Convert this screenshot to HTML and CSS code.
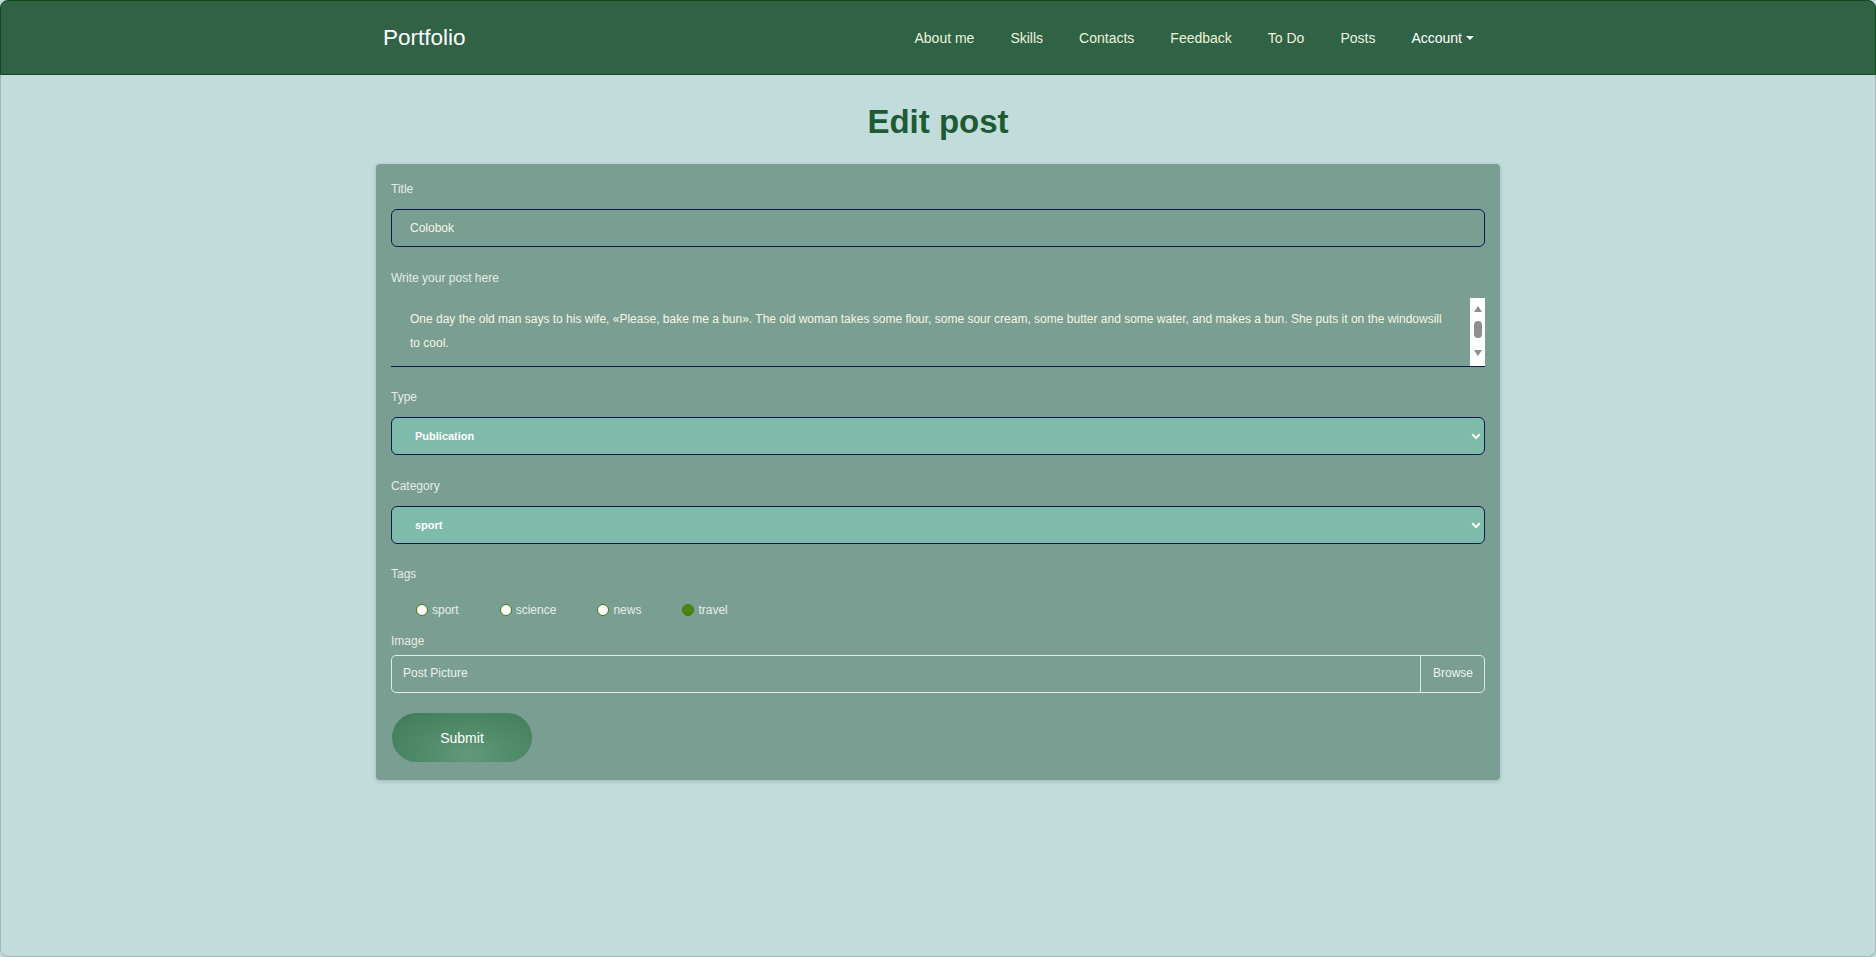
FILE: index.html
```html
<!DOCTYPE html>
<html lang="en">
<head>
<meta charset="utf-8">
<title>Edit post</title>
<link rel="stylesheet" href="styles.css">
</head>
<body>
<div class="page">
  <nav class="navbar">
    <div class="nav-inner">
      <a class="brand" href="#">Portfolio</a>
      <ul class="nav-links">
        <li><a href="#">About me</a></li>
        <li><a href="#">Skills</a></li>
        <li><a href="#">Contacts</a></li>
        <li><a href="#">Feedback</a></li>
        <li><a href="#">To Do</a></li>
        <li><a href="#">Posts</a></li>
        <li><a href="#" class="account">Account<span class="caret"></span></a></li>
      </ul>
    </div>
  </nav>

  <h1 class="page-title">Edit post</h1>

  <form class="card">
    <div class="group">
      <label class="label" for="title">Title</label>
      <input class="text-input" id="title" type="text" value="Colobok">
    </div>

    <div class="group">
      <label class="label" for="body">Write your post here</label>
      <div class="textarea-wrap">
        <textarea class="textarea" id="body">One day the old man says to his wife, «Please, bake me a bun». The old woman takes some flour, some sour cream, some butter and some water, and makes a bun. She puts it on the windowsill to cool.

The bun lies there, lies there, and then rolls off the windowsill onto the bench, from the bench onto the floor, along the floor to the door, over the threshold into the porch, from the porch into the yard, and out of the yard through the gate, further and further away.</textarea>
        <div class="scrollbar">
          <span class="sb-up"></span>
          <span class="sb-thumb"></span>
          <span class="sb-down"></span>
        </div>
      </div>
    </div>

    <div class="group">
      <label class="label" for="type">Type</label>
      <div class="select-wrap">
        <select class="select" id="type">
          <option>Publication</option>
          <option>Draft</option>
        </select>
        <svg class="chevron" width="10" height="7" viewBox="0 0 10 7"><polyline points="1.2,1.2 5,5 8.8,1.2" fill="none" stroke="#ffffff" stroke-width="2"/></svg>
      </div>
    </div>

    <div class="group">
      <label class="label" for="category">Category</label>
      <div class="select-wrap">
        <select class="select" id="category">
          <option>sport</option>
          <option>science</option>
          <option>news</option>
          <option>travel</option>
        </select>
        <svg class="chevron" width="10" height="7" viewBox="0 0 10 7"><polyline points="1.2,1.2 5,5 8.8,1.2" fill="none" stroke="#ffffff" stroke-width="2"/></svg>
      </div>
    </div>

    <div class="group tags-group">
      <span class="label">Tags</span>
      <div class="tags-row">
        <label class="tag"><input type="radio" name="tag" class="radio">sport</label>
        <label class="tag"><input type="radio" name="tag" class="radio">science</label>
        <label class="tag"><input type="radio" name="tag" class="radio">news</label>
        <label class="tag"><input type="radio" name="tag" class="radio" checked>travel</label>
      </div>
    </div>

    <div class="image-group">
      <span class="label label-tight">Image</span>
      <div class="file">
        <span class="file-name">Post Picture</span>
        <span class="browse">Browse</span>
      </div>
    </div>

    <button type="button" class="submit">Submit</button>
  </form>
</div>
</body>
</html>
```

FILE: styles.css
```css
* {
  box-sizing: border-box;
}

html, body {
  margin: 0;
  padding: 0;
}

body {
  background: #c2dcdc;
  font-family: "Liberation Sans", Arial, sans-serif;
  color: #e6eee8;
}

.page {
  min-height: 100vh;
  border: 1px solid #a3b7b7;
  border-top: none;
  border-radius: 8px;
}

.navbar {
  height: 75px;
  background: #306346;
  border: 1px solid #0f4a1e;
  border-radius: 8px 8px 0 0;
  margin: 0 -1px;
}

.nav-inner {
  width: 1124px;
  height: 100%;
  margin: 0 auto;
  padding: 1px 8px 0 7px;
  display: flex;
  align-items: center;
  justify-content: space-between;
}

.brand {
  font-size: 22.5px;
  color: #ffffff;
  text-decoration: none;
  line-height: 1;
}

.nav-links {
  list-style: none;
  margin: 0;
  padding: 0;
  display: flex;
  align-items: center;
}

.nav-links a {
  display: flex;
  align-items: center;
  padding: 0 18px;
  font-size: 14px;
  color: #eef2dc;
  text-decoration: none;
  line-height: 20px;
}

.nav-links a.account {
  color: #ffffff;
}

.caret {
  display: inline-block;
  margin-left: 4px;
  width: 0;
  height: 0;
  border-top: 4px solid #ffffff;
  border-left: 4px solid transparent;
  border-right: 4px solid transparent;
}

.page-title {
  margin: 27px 0 22px;
  text-align: center;
  font-size: 33px;
  line-height: 40px;
  font-weight: bold;
  color: #1e5b34;
}

.card {
  width: 1124px;
  margin: 0 auto;
  padding: 18px 15px 18px;
  background: #7a9e92;
  border-radius: 4px;
  box-shadow: 0 1px 4px rgba(40, 70, 60, 0.25);
}

.group {
  margin-bottom: 23.5px;
}

.label {
  display: block;
  font-size: 12px;
  line-height: 14px;
  margin-bottom: 13px;
  color: #e4ece6;
}

.label-tight {
  margin-bottom: 7px;
}

.text-input {
  display: block;
  width: 100%;
  height: 38px;
  padding: 0 18px;
  border: 1px solid #0f1a4c;
  border-radius: 6px;
  background: transparent;
  font-family: inherit;
  font-size: 12px;
  color: #f6f5e6;
  outline: none;
}

.textarea-wrap {
  display: flex;
  height: 69px;
  border-bottom: 1px solid #0f1a4c;
}

.textarea {
  flex: 1;
  height: 68px;
  padding: 9px 20px 0 19px;
  border: none;
  background: transparent;
  resize: none;
  overflow: hidden;
  font-family: inherit;
  font-size: 12px;
  line-height: 24px;
  color: #f6f5e6;
  outline: none;
}

.scrollbar {
  width: 15px;
  height: 68px;
  background: #ffffff;
  display: flex;
  flex-direction: column;
  align-items: center;
}

.sb-up {
  margin-top: 8px;
  width: 0;
  height: 0;
  border-bottom: 6px solid #8f8f8f;
  border-left: 4.5px solid transparent;
  border-right: 4.5px solid transparent;
}

.sb-thumb {
  margin-top: 9px;
  width: 8px;
  height: 17px;
  border-radius: 4px;
  background: #8f8f8f;
}

.sb-down {
  margin-top: 12px;
  width: 0;
  height: 0;
  border-top: 6px solid #8f8f8f;
  border-left: 4.5px solid transparent;
  border-right: 4.5px solid transparent;
}

.select-wrap {
  position: relative;
}

.select {
  display: block;
  width: 100%;
  height: 38px;
  padding: 0 23px;
  border: 1px solid #0f1a4c;
  border-radius: 6px;
  background: #7ebbaa;
  font-family: inherit;
  font-size: 11px;
  font-weight: bold;
  color: #ffffff;
  -webkit-appearance: none;
  appearance: none;
  outline: none;
}

.chevron {
  position: absolute;
  right: 4px;
  top: 16px;
}

.tags-group {
  margin-bottom: 0;
}

.tags-row {
  height: 40px;
  padding: 6px 0 0 25px;
  display: flex;
  align-items: flex-start;
  gap: 41px;
}

.tag {
  display: flex;
  align-items: center;
  gap: 4px;
  height: 20px;
  font-size: 12px;
  color: #e6eee8;
}

.radio {
  -webkit-appearance: none;
  appearance: none;
  margin: 0;
  width: 12px;
  height: 12px;
  border-radius: 50%;
  border: 1px solid #3d7a14;
  background: #ffffff;
}

.radio:checked {
  background: #4b850d;
  border-color: #3f7a0c;
}

.file {
  display: flex;
  height: 38px;
  border: 1px solid #e2ebe7;
  border-radius: 5px;
  font-size: 12px;
  color: #eef3ef;
}

.file-name {
  flex: 1;
  display: flex;
  align-items: center;
  padding-left: 11px;
  padding-bottom: 3px;
}

.browse {
  display: flex;
  align-items: center;
  padding: 0 11px 3px 12px;
  border-left: 1px solid #e2ebe7;
}

.submit {
  display: block;
  margin: 20px 0 0 1px;
  width: 140px;
  height: 49px;
  border: none;
  border-radius: 25px;
  background: radial-gradient(ellipse at 55% 85%, #62997a 0%, #4f8a69 45%, #3f7b59 100%);
  font-family: inherit;
  font-size: 14px;
  color: #ffffff;
}
```
